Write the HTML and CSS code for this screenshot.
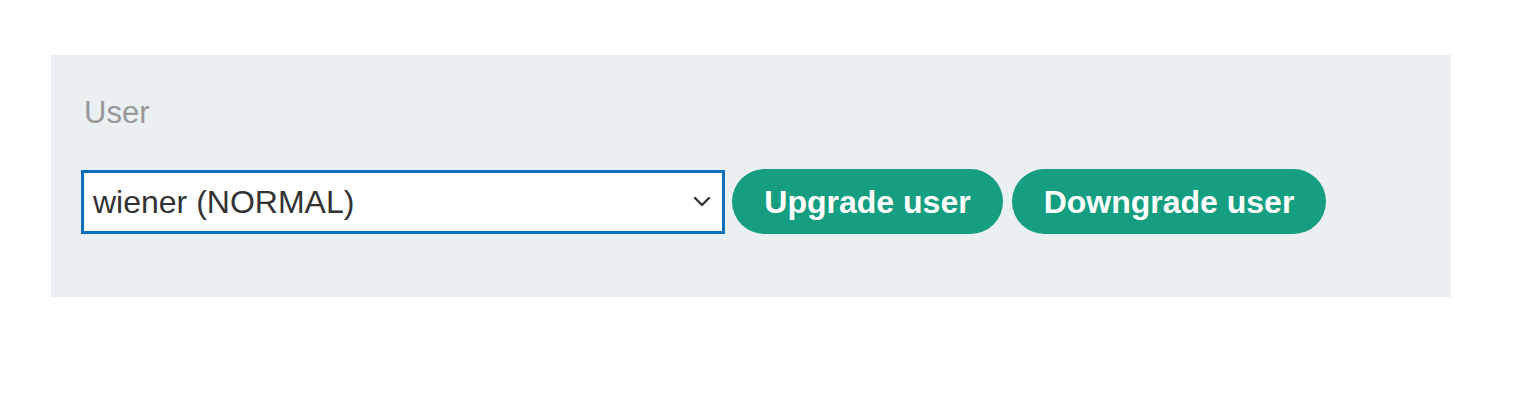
FILE: index.html
```html
<!DOCTYPE html>
<html>
<head>
<meta charset="utf-8">
<link rel="stylesheet" href="styles.css">
</head>
<body>
<div class="panel">
  <div class="label">User</div>
  <div class="row">
    <div class="select">
      <span class="value">wiener (NORMAL)</span>
      <svg class="chev" width="18" height="11" viewBox="0 0 18 11"><path d="M2 2 L9 9 L16 2" fill="none" stroke="#333" stroke-width="2.4" stroke-linecap="round" stroke-linejoin="round"/></svg>
    </div>
    <button class="btn btn-up">Upgrade user</button>
    <button class="btn btn-down">Downgrade user</button>
  </div>
</div>
</body>
</html>
```
FILE: styles.css
```css
html, body { margin: 0; padding: 0; background: #fff; }
body { font-family: "Liberation Sans", Arial, sans-serif; }
.panel {
  margin: 55px 0 0 51px;
  width: 1400px;
  height: 242px;
  box-sizing: border-box;
  background: #eaeff2;
  padding: 32px 30px 0 30px;
}
.label {
  font-size: 31px;
  line-height: 48px;
  color: #999;
  padding-left: 3px;
  position: relative;
  top: 2px;
}
.row {
  display: flex;
  align-items: center;
  gap: 8px;
  margin-top: 34px;
}
.select {
  width: 644px;
  height: 64px;
  box-sizing: border-box;
  border: 3px solid #0a6fbd;
  background: #fff;
  display: flex;
  align-items: center;
  justify-content: space-between;
  padding: 0 11px 0 9px;
  font-size: 32px;
  color: #333;
}
.value { position: relative; top: 1px; }
.chev { display: block; }
.btn {
  height: 65px;
  border: none;
  border-radius: 33px;
  background: #169e81;
  color: #fff;
  font-family: "Liberation Sans", Arial, sans-serif;
  font-weight: bold;
  font-size: 32px;
  padding: 2px 0 0 0;
  cursor: pointer;
}
.btn-up { width: 271px; margin-left: -1px; }
.btn-down { width: 314px; margin-left: 1px; }
```
